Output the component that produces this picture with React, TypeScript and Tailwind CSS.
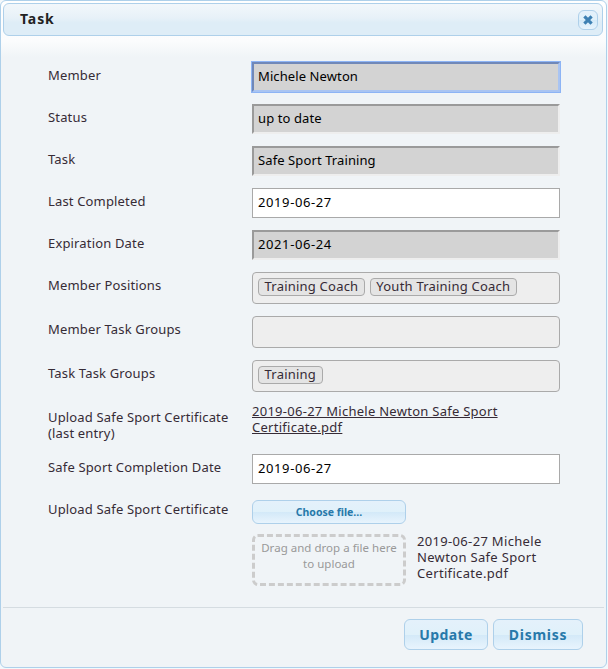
import React from 'react';

function Row({ label, children, className = '' }: { label: React.ReactNode; children?: React.ReactNode; className?: string }) {
  return (
    <div className={`flex items-start ${className}`}>
      <label className="w-[205px] shrink-0 pt-[5px] pb-px pl-px tracking-[0.16px] whitespace-nowrap">{label}</label>
      <div className="w-[308px]">{children}</div>
    </div>
  );
}

function Field({ value, disabled, focused }: { value: string; disabled?: boolean; focused?: boolean }) {
  const look = disabled
    ? 'border-2 bg-[#d3d3d3] px-1'
    : 'border border-[#a9a9a9] bg-white px-[5px]';
  const edges = focused
    ? 'border-t-[#7088b8] border-l-[#7088b8] border-r-[#a9c4f2] border-b-[#a9c4f2] shadow-[0_0_0_1px_#8db4f5]'
    : disabled
      ? 'border-t-[#9a9a9a] border-l-[#9a9a9a] border-r-[#eeeeee] border-b-[#eeeeee]'
      : '';
  const spacing = /^\d/.test(value) ? 'tracking-[0.6px]' : 'tracking-[0.1px]';
  return (
    <input
      readOnly
      value={value}
      className={`block h-[30px] w-full pb-0.5 text-black outline-none ${look} ${edges} ${spacing}`}
    />
  );
}

function Tags({ items }: { items: string[] }) {
  return (
    <div className="flex h-8 gap-[5px] rounded-[4px] border border-[#aaa] bg-[#eee] px-[5px] pt-[5px]">
      {items.map((t) => (
        <span key={t} className="h-[18px] rounded-[4px] border border-[#aaa] bg-[#e4e4e4] px-[5.5px] leading-[14px] tracking-[0.22px] whitespace-nowrap">
          {t}
        </span>
      ))}
    </div>
  );
}

const button =
  'rounded-[6px] border border-[#aed0ea] bg-[linear-gradient(#e4f1fb_0%,#e0f1fa_50%,#d3e9f8_51%,#e8f4fd_100%)] font-bold text-[#2779aa]';

export default function App() {
  return (
    <div className="h-[669px] w-[608px] overflow-hidden bg-[#f4f8fb] font-['Noto_Sans',sans-serif] text-[13px] leading-4 text-[#362b36]">
      <div className="flex h-[668px] w-[607px] flex-col rounded-[6px] border border-[#aed0ea] bg-[#f0f4f7] bg-[linear-gradient(#ffffff_0px,#fbfcfd_40px,#f0f4f7_56px)] px-0.5 pt-0.5">
        <header className="flex h-[33px] w-[600px] shrink-0 items-center justify-between rounded-[6px] border border-[#aed0ea] bg-[linear-gradient(#f2f7fb_0%,#e7f1f8_45%,#deedf7_60%,#deedf7_100%)] pr-1 pl-4">
          <h1 className="pb-px text-[14px] font-bold tracking-[0.9px] text-[#222]">Task</h1>
          <button aria-label="Close" className={`flex size-5 items-center justify-center ${button}`}>
            <svg width="10" height="10" viewBox="0 0 10 10" fill="none" stroke="#3d80b3" strokeWidth="3.2">
              <path d="M1.4 1.4 8.6 8.6M8.6 1.4 1.4 8.6" />
            </svg>
          </button>
        </header>
        <main className="flex h-[572px] shrink-0 flex-col gap-3 border-b border-[#d5dce1] pt-[26px] pl-11">
          <Row label="Member"><Field value="Michele Newton" disabled focused /></Row>
          <Row label="Status"><Field value="up to date" disabled /></Row>
          <Row label="Task"><Field value="Safe Sport Training" disabled /></Row>
          <Row label="Last Completed"><Field value="2019-06-27" /></Row>
          <Row label="Expiration Date"><Field value="2021-06-24" disabled /></Row>
          <Row label="Member Positions"><Tags items={['Training Coach', 'Youth Training Coach']} /></Row>
          <Row label="Member Task Groups"><Tags items={[]} /></Row>
          <Row label="Task Task Groups"><Tags items={['Training']} /></Row>
          <Row label={<>Upload Safe Sport Certificate<br />(last entry)</>}>
            <a className="-mt-px block whitespace-nowrap tracking-[0.27px] underline">2019-06-27 Michele Newton Safe Sport<br />Certificate.pdf</a>
          </Row>
          <Row label="Safe Sport Completion Date"><Field value="2019-06-27" /></Row>
          <Row label="Upload Safe Sport Certificate">
            <button className={`mt-1 block h-6 w-[154px] text-[10.5px] ${button}`}>Choose file...</button>
            <div className="mt-2.5 flex gap-[11px]">
              <div className="h-[52px] w-[154px] shrink-0 rounded-[6px] border-3 border-dashed border-[#ccc] pt-[3px] text-center text-[11.5px] tracking-[0.02px] whitespace-nowrap text-[#999]">
                Drag and drop a file here<br />to upload
              </div>
              <p className="-mt-px whitespace-nowrap tracking-[0.33px]">2019-06-27 Michele<br />Newton Safe Sport<br />Certificate.pdf</p>
            </div>
          </Row>
        </main>
        <footer className="flex justify-end gap-[5px] pt-[11px] pr-[21px]">
          <button className={`h-[31px] w-[84px] text-[14px] tracking-[0.4px] ${button}`}>Update</button>
          <button className={`h-[31px] w-[90px] text-[14px] tracking-[0.7px] ${button}`}>Dismiss</button>
        </footer>
      </div>
    </div>
  );
}
